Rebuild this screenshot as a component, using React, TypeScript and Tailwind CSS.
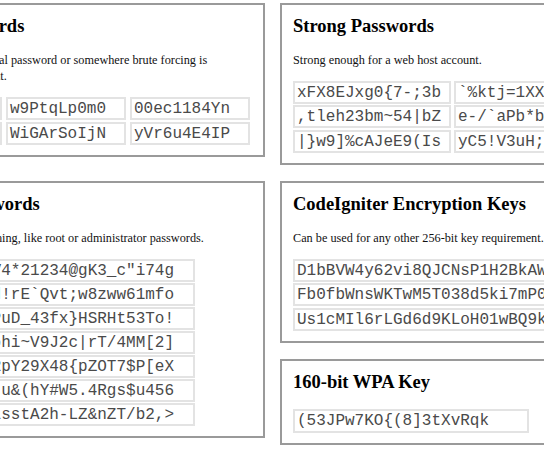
import React from 'react';

const serif = "font-['Liberation_Serif','Times_New_Roman',serif]";

const Cell = ({ text, w, h = 'h-[23px]' }: { text: string; w: string; h?: string }) => (
  <div
    className={`${w} ${h} shrink-0 border-2 border-[#e3e3e3] pl-[2px] pt-[1px] flex items-center overflow-hidden whitespace-pre font-['Liberation_Mono','Courier_New',monospace] text-[16px] text-[#4a4a4a]`}
  >
    {text}
  </div>
);

const Panel = ({
  title,
  desc,
  children,
}: {
  title: string;
  desc?: React.ReactNode;
  children: React.ReactNode;
}) => (
  <section className={`border-2 border-[#9a9a9a] bg-white px-[11px] pt-[10px] pb-[10px] ${serif}`}>
    <h3 className="text-[18.5px] leading-[22px] font-bold text-black whitespace-nowrap">{title}</h3>
    {desc && <p className="mt-[15px] text-[12.25px] leading-[16px] text-[#111] whitespace-nowrap">{desc}</p>}
    {children}
  </section>
);

const decent = [
  ['hT4mQe8Rz2', 'w9PtqLp0m0', '00ec1184Yn'],
  ['Kp3XvN7aLd', 'WiGArSoIjN', 'yVr6u4E4IP'],
];

const strong = [
  ['xFX8EJxg0{7-;3b', '`%ktj=1XXa+9Qd'],
  [',tleh23bm~54|bZ', 'e-/`aPb*bW3}r7'],
  ['|}w9]%cAJeE9(Is', 'yC5!V3uH;q8^Lm'],
];

const fortKnox = [
  'Qm7#zR2$pL!V4*21234@gK3_c"i74g',
  'b9^Tx&Lq0wZd!rE`Qvt;w8zww61mfo',
  'N2*gk]7Hs+aPuD_43fx}HSRHt53To!',
  'r5@Wy(Ec1%Mohi~V9J2c|rT/4MM[2]',
  'Z8&vQ3n{Lt6RpY29X48{pZOT7$P[eX',
  'k1=Bd4;Gx7^Ju&(hY#W5.4Rgs$u456',
  'F6?oS0!mYc9isstA2h-LZ&nZT/b2,>',
];

const codeigniter = [
  'D1bBVW4y62vi8QJCNsP1H2BkAW7xQe',
  'Fb0fbWnsWKTwM5T038d5ki7mP0Zr3L',
  'Us1cMIl6rLGd6d9KLoH01wBQ9kTn2Y',
];

export default function App() {
  return (
    <div className="w-[544px] h-[450px] overflow-hidden bg-white">
      <div className="ml-[-131px] pt-[3px] flex flex-col gap-[16.5px]">
        <div className="flex items-start gap-[15px]">
          <div className="w-[396px] shrink-0">
            <Panel
              title="Decent Passwords"
              desc={
                <>
                  Good enough as a normal password or somewhere brute forcing is
                  <br />
                  not a very realistic threat.
                </>
              }
            >
              <div className="mt-[13px] flex flex-col gap-[1.5px]">
                {decent.map((row, i) => (
                  <div key={i} className="flex gap-[4px]">
                    {row.map((t) => (
                      <Cell key={t} text={t} w="w-[120px]" />
                    ))}
                  </div>
                ))}
              </div>
            </Panel>
          </div>
          <div className="w-[396px] shrink-0">
            <Panel title="Strong Passwords" desc="Strong enough for a web host account.">
              <div className="mt-[12.5px] flex flex-col gap-[1.5px]">
                {strong.map((row, i) => (
                  <div key={i} className="flex gap-[3px]">
                    {row.map((t) => (
                      <Cell key={t} text={t} w="w-[158px]" />
                    ))}
                  </div>
                ))}
              </div>
            </Panel>
          </div>
        </div>

        <div className="flex items-start gap-[15px]">
          <div className="w-[396px] shrink-0">
            <Panel
              title="Ft. Knox Passwords"
              desc="Secure enough for anything, like root or administrator passwords."
            >
              <div className="mt-[12.5px] flex flex-col gap-[1px]">
                {fortKnox.map((t) => (
                  <Cell key={t} text={t} w="w-[313px]" />
                ))}
              </div>
            </Panel>
          </div>
          <div className="w-[396px] shrink-0 flex flex-col gap-[16px]">
            <Panel title="CodeIgniter Encryption Keys" desc="Can be used for any other 256-bit key requirement.">
              <div className="mt-[12.5px] flex flex-col gap-[1.5px]">
                {codeigniter.map((t) => (
                  <Cell key={t} text={t} w="w-[330px]" />
                ))}
              </div>
            </Panel>
            <Panel title="160-bit WPA Key">
              <div className="mt-[16px]">
                <Cell text="(53JPw7KO{(8]3tXvRqk" w="w-[236px]" h="h-[24px]" />
              </div>
            </Panel>
          </div>
        </div>
      </div>
    </div>
  );
}
